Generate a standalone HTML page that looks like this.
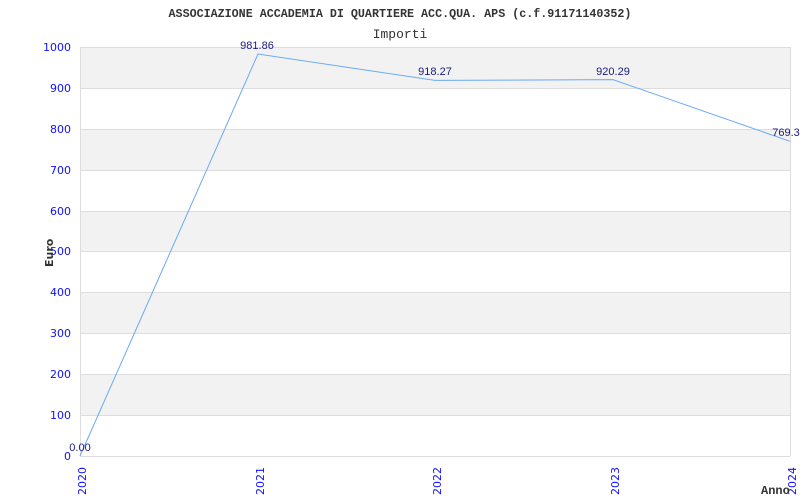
<!DOCTYPE html>
<html><head><meta charset="utf-8"><style>
html,body{margin:0;padding:0;background:#fff;}
svg{display:block;}
</style></head><body>
<svg width="800" height="500" xmlns="http://www.w3.org/2000/svg">
<rect width="800" height="500" fill="#fff"/>
<text x="400" y="17" text-anchor="middle" font-family="Liberation Mono, monospace" font-size="11.7" font-weight="bold" fill="#333">ASSOCIAZIONE ACCADEMIA DI QUARTIERE ACC.QUA. APS (c.f.91171140352)</text>
<text x="400" y="38" text-anchor="middle" font-family="Liberation Mono, monospace" font-size="13" fill="#333">Importi</text>
<g fill="#f2f2f2">
<rect x="80" y="47" width="710" height="41"/>
<rect x="80" y="129" width="710" height="41"/>
<rect x="80" y="211" width="710" height="40"/>
<rect x="80" y="292" width="710" height="41"/>
<rect x="80" y="374" width="710" height="41"/>
</g>
<g stroke="#ddd" stroke-width="1">
<line x1="80" y1="47.5" x2="790" y2="47.5"/>
<line x1="80" y1="88.5" x2="790" y2="88.5"/>
<line x1="80" y1="129.5" x2="790" y2="129.5"/>
<line x1="80" y1="170.5" x2="790" y2="170.5"/>
<line x1="80" y1="211.5" x2="790" y2="211.5"/>
<line x1="80" y1="251.5" x2="790" y2="251.5"/>
<line x1="80" y1="292.5" x2="790" y2="292.5"/>
<line x1="80" y1="333.5" x2="790" y2="333.5"/>
<line x1="80" y1="374.5" x2="790" y2="374.5"/>
<line x1="80" y1="415.5" x2="790" y2="415.5"/>
<line x1="80" y1="456.5" x2="790" y2="456.5"/>
<line x1="80.5" y1="47" x2="80.5" y2="456"/>
<line x1="790.5" y1="47" x2="790.5" y2="456"/>
</g>
<g font-family="DejaVu Sans, sans-serif" font-size="11" fill="#1010ff" text-anchor="end">
<text x="71" y="51">1000</text>
<text x="71" y="92">900</text>
<text x="71" y="133">800</text>
<text x="71" y="174">700</text>
<text x="71" y="215">600</text>
<text x="71" y="255">500</text>
<text x="71" y="296">400</text>
<text x="71" y="337">300</text>
<text x="71" y="378">200</text>
<text x="71" y="419">100</text>
<text x="71" y="460">0</text>
</g>
<g font-family="DejaVu Sans, sans-serif" font-size="11" fill="#1010ff">
<text transform="translate(86,495) rotate(-90)">2020</text>
<text transform="translate(264,495) rotate(-90)">2021</text>
<text transform="translate(441,495) rotate(-90)">2022</text>
<text transform="translate(619,495) rotate(-90)">2023</text>
<text transform="translate(796,495) rotate(-90)">2024</text>
</g>
<text transform="translate(53,267) rotate(-90)" font-family="DejaVu Sans, sans-serif" font-size="11" font-weight="bold" fill="#333">Euro</text>
<text x="761" y="494" font-family="Liberation Mono, monospace" font-size="12" font-weight="bold" fill="#333">Anno</text>
<polyline points="80,456 258,54 435,80.4 613,79.6 790,141.3" fill="none" stroke="#6aaaf5" stroke-width="1"/>
<g font-family="Liberation Sans, sans-serif" font-size="11" fill="#1a1a80" text-anchor="middle">
<text x="80" y="451">0.00</text>
<text x="257" y="49">981.86</text>
<text x="435" y="75">918.27</text>
<text x="613" y="75">920.29</text>
<text x="786" y="136">769.3</text>
</g>
</svg>
</body></html>
